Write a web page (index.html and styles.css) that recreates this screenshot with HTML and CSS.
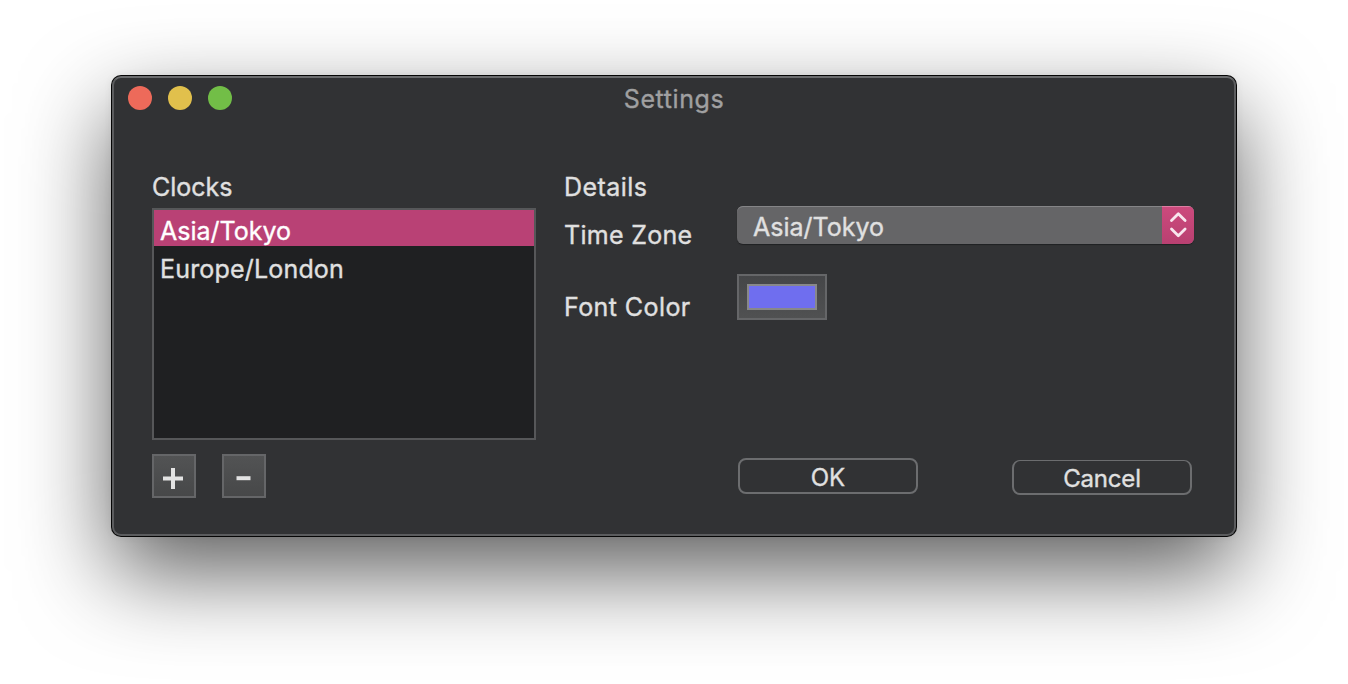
FILE: index.html
```html
<!DOCTYPE html>
<html lang="en">
<head>
<meta charset="utf-8">
<title>Settings</title>
<link rel="stylesheet" href="styles.css">
</head>
<body>
<main class="window">
  <header class="titlebar">
    <div class="lights"><span class="light close"></span><span class="light minimize"></span><span class="light zoom"></span></div>
    <h1 class="title">Settings</h1>
  </header>
  <div class="content">
    <section class="clocks">
      <h2 class="heading">Clocks</h2>
      <ul class="list">
        <li class="item selected">Asia/Tokyo</li>
        <li class="item spaced">Europe/London</li>
      </ul>
      <div class="tools">
        <button class="tool" aria-label="Add"><svg width="40" height="40" viewBox="0 0 40 40"><path d="M9 22.5H29M19 12V33" stroke="#e3e3e3" stroke-width="4"/></svg></button>
        <button class="tool" aria-label="Remove"><svg width="40" height="40" viewBox="0 0 40 40"><path d="M12.5 22.2H26.5" stroke="#e3e3e3" stroke-width="4"/></svg></button>
      </div>
    </section>
    <section class="details">
      <h2 class="heading details-heading">Details</h2>
      <div class="row zone-row">
        <span class="label">Time Zone</span>
        <div class="select">
          <span class="value">Asia/Tokyo</span>
          <span class="stepper"><svg width="32" height="38" viewBox="0 0 32 38"><path d="M9.5 14.5 16.3 7.8 23.1 14.5M9.5 23.1 16.3 29.8 23.1 23.1" fill="none" stroke="#f8e6ee" stroke-width="2.8" stroke-linecap="round" stroke-linejoin="round"/></svg></span>
        </div>
      </div>
      <div class="row color-row">
        <span class="label">Font Color</span>
        <div class="well"><div class="swatch"></div></div>
      </div>
      <div class="actions">
        <button class="btn ok">OK</button>
        <button class="btn cancel">Cancel</button>
      </div>
    </section>
  </div>
</main>
</body>
</html>
```
FILE: styles.css
```css
* { box-sizing: border-box; }
body {
  margin: 0;
  height: 684px;
  padding: 76px 112px 0;
  overflow: hidden;
  background: #fff;
  font-family: Inter, "Liberation Sans", sans-serif;
  font-size: 25px;
  line-height: 32px;
  color: #e0e0e0;
  -webkit-text-stroke: .35px currentColor;
}
h1, h2, ul { margin: 0; padding: 0; font-size: inherit; font-weight: 400; }
button { margin: 0; padding: 0; font: inherit; color: inherit; }
svg { display: block; }
.window {
  width: 1124px;
  height: 460px;
  border: 2px solid #5b5c5e;
  border-top-color: #6b6c6e;
  border-radius: 9px;
  background: #313234;
  box-shadow: 0 0 0 1px #050505, 0 36px 90px rgba(0, 0, 0, .64), 0 0 8px rgba(0, 0, 0, .08);
}
.titlebar {
  display: grid;
  grid-template-columns: 1fr auto 1fr;
  align-items: center;
  height: 40px;
  padding: 0 14px;
}
.lights { display: flex; gap: 16px; }
.light { width: 24px; height: 24px; border-radius: 50%; }
.close { background: #ed6a5a; }
.minimize { background: #e1c04c; }
.zoom { background: #72be47; }
.title { color: #a0a0a1; padding-top: 2px; letter-spacing: .58px; }
.content { display: flex; gap: 28px; padding: 53px 40px 0 38px; }
.clocks { width: 384px; }
.details { width: 630px; }
.heading { height: 32px; }
.details-heading { letter-spacing: .45px; }
.list {
  height: 232px;
  margin-top: 5px;
  border: 2px solid #565759;
  background: #1f2022;
  list-style: none;
}
.item { height: 36px; margin-bottom: 2px; padding: 5px 0 0 6px; }
.selected { background: #b94175; color: #fff; }
.spaced { letter-spacing: .18px; }
.tools { display: flex; gap: 26px; margin-top: 14px; }
.tool {
  width: 44px;
  height: 44px;
  border: 2px solid #656668;
  background: linear-gradient(#525354, #474849);
}
.row { display: flex; }
.label { width: 173px; }
.zone-row { height: 38px; margin-top: 3px; }
.zone-row .label { padding-top: 13px; letter-spacing: .3px; }
.select {
  display: flex;
  justify-content: space-between;
  width: 457px;
  height: 38px;
  border-radius: 6px;
  overflow: hidden;
  background: #656567;
  box-shadow: inset 0 1px #858587, 0 1px 1px #202123;
}
.value { padding: 5px 0 0 16px; }
.stepper { width: 32px; background: linear-gradient(#de7da2 0 1px, #cc4a7d 1px, #b94071); }
.color-row { height: 46px; margin-top: 30px; }
.color-row .label { padding-top: 17px; letter-spacing: .42px; }
.well {
  width: 90px;
  height: 46px;
  padding: 8px;
  border: 2px solid #656668;
  background: linear-gradient(#454648, #505152);
}
.swatch { width: 70px; height: 26px; border: 2px solid #888889; background: #6f6eef; }
.actions {
  display: flex;
  justify-content: space-between;
  align-items: flex-start;
  width: 454px;
  margin: 138px 0 0 174px;
}
.btn {
  width: 180px;
  height: 36px;
  border: 2px solid #6c6d6f;
  border-radius: 8px;
  background: none;
  font-size: 24px;
  line-height: 28px;
}
.ok { padding-top: 3px; }
.cancel { height: 35px; margin-top: 2px; border-top-width: 1px; padding-top: 4px; letter-spacing: -.2px; }
```
